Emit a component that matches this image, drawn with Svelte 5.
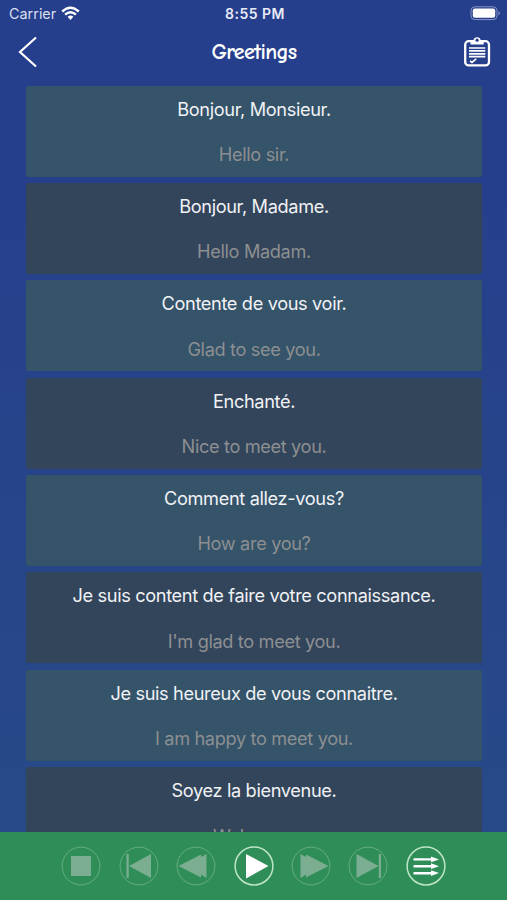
<script>
  const phrases = [
    ['Bonjour, Monsieur.', 'Hello sir.'],
    ['Bonjour, Madame.', 'Hello Madam.'],
    ['Contente de vous voir.', 'Glad to see you.'],
    ['Enchanté.', 'Nice to meet you.'],
    ['Comment allez-vous?', 'How are you?'],
    ['Je suis content de faire votre connaissance.', "I'm glad to meet you."],
    ['Je suis heureux de vous connaitre.', 'I am happy to meet you.'],
    ['Soyez la bienvenue.', 'Welcome.']
  ];

  // Glyphs share a 40×40 box centred on the ring.
  const controls = [
    { label: 'Stop', d: 'M10 10H30V30H10Z' },
    { label: 'First', d: 'M7.5 8H9.7V32H7.5ZM10 20L32 8V32Z' },
    { label: 'Rewind', d: 'M2.5 20L25 8.5V11L30.5 8V32L25 28.5V31.5Z' },
    { label: 'Play', d: 'M12 8L34.5 20L12 32.5Z', active: true },
    { label: 'Forward', d: 'M9.5 8L15 11V8.5L37.5 20L15 31.5V28.5L9.5 32Z' },
    { label: 'Last', d: 'M8.5 8L30.5 20L8.5 32ZM30.8 8H33V32H30.8Z' },
    {
      label: 'Play in order',
      d: 'M7.5 12.2H25V10.5L33 13.4L25 16.2V14.600H7.5ZM7.5 19H25V17.200L33 20.2L25 23V21.400H7.5ZM7.5 26H25V24.200L33 27.100L25 30V28.400H7.5Z',
      active: true
    }
  ];
</script>

<div class="screen">
  <div class="status">
    <div class="carrier">
      <span>Carrier</span>
      <svg width="19" height="15" viewBox="0 0 19 15" fill="none" stroke="#fff" stroke-width="2.4">
        <path d="M1.2 5.5Q9.5-2.2 17.800 5.5M4.100 8.700Q9.5 3.700 14.900 8.700" />
        <path d="M6.600 10.700Q9.5 8.300 12.400 10.700L9.5 13.900Z" fill="#fff" stroke="none" />
      </svg>
    </div>
    <div class="clock">8:55 PM</div>
    <svg class="battery" width="31" height="15" viewBox="0 0 31 15">
      <rect x="1" y=".8" width="26" height="12.800" rx="3.800" fill="none" stroke="#8794c8" />
      <rect x="2.800" y="2.600" width="22.400" height="9.200" rx="2" fill="#fff" />
      <path d="M28.500 5Q31.200 7.200 28.500 9.500Z" fill="#8794c8" />
    </svg>
  </div>

  <header>
    <button aria-label="Back">
      <svg width="22" height="34" viewBox="0 0 22 34" fill="none" stroke="#fff" stroke-width="2.2">
        <path d="M19 2.5L3 17L19 31.5" />
      </svg>
    </button>
    <h1>Greetings</h1>
    <button aria-label="Phrase list">
      <svg width="28" height="32" viewBox="0 0 28 32" fill="none" stroke="#fff">
        <rect x="2.200" y="5.200" width="23.800" height="24.200" rx="3.500" stroke-width="2.300" />
        <path d="M7.500 8.500V5.700Q7.500 4.500 9 4.500H10.500C10.700 .1 17.500 .1 17.700 4.500H19.200Q20.700 4.500 20.700 5.700V8.500Z" fill="#fff" stroke="none" />
        <circle cx="14.100" cy="4.200" r="1.600" fill="#263f8c" stroke="none" />
        <path d="M6 12H22.300M6 14.900H22.300M6 17.800H22.300M6 20.700H22.300" stroke-width="1.700" />
        <path d="M7 24.800L9 26.400L13.200 22.900" stroke-width="1.700" />
      </svg>
    </button>
  </header>

  <main>
    {#each phrases as [french, english]}
      <article>
        <p>{french}</p>
        <p class="translation">{english}</p>
      </article>
    {/each}
  </main>

  <footer>
    {#each controls as control}
      <button class:active={control.active} aria-label={control.label}>
        <svg width="40" height="40" viewBox="0 0 40 40">
          <circle cx="20" cy="20" r="18.900" fill="none" />
          <path d={control.d} />
        </svg>
      </button>
    {/each}
  </footer>
</div>

<style>
  .screen {
    width: 507px;
    height: 900px;
    display: flex;
    flex-direction: column;
    overflow: hidden;
    background: linear-gradient(#263f8c 0%, #263f8c 20%, #284a88 92%);
    color: #fff;
    font-family: Inter, "Liberation Sans", sans-serif;
  }
  button {
    display: block;
    padding: 0;
    border: 0;
    background: none;
  }
  svg {
    display: block;
  }
  .status {
    flex: none;
    height: 27px;
    display: grid;
    grid-template-columns: 1fr auto 1fr;
    align-items: center;
    padding: 0 6px 0 9px;
    box-sizing: border-box;
  }
  .carrier {
    display: flex;
    align-items: center;
    gap: 5px;
    font-size: 14.4px;
    letter-spacing: 0;
    color: #d9def0;
  }
  .carrier svg {
    margin-top: -1px;
  }
  .clock {
    font-size: 14px;
    font-weight: 600;
    letter-spacing: 0.5px;
    color: #e7eaf6;
  }
  .battery {
    justify-self: end;
    margin-top: -1px;
  }
  header {
    flex: none;
    height: 58.6px;
    display: grid;
    grid-template-columns: 1fr auto 1fr;
    align-items: start;
    padding: 8px 16px 0 17px;
    box-sizing: border-box;
  }
  header button:first-child {
    justify-self: start;
  }
  header button:last-child {
    justify-self: end;
    padding-top: 1px;
  }
  h1 {
    margin: 3px 0 0;
    font: 700 22px/28px "Marker Felt", "Comic Neue", "DejaVu Sans Condensed", sans-serif;
    letter-spacing: -0.7px;
  }
  main {
    flex: 1;
    min-height: 0;
    overflow: hidden;
    display: flex;
    flex-direction: column;
    gap: 6.35px;
    padding: 0 25px 0 26px;
  }
  article {
    flex: none;
    height: 91px;
    display: flex;
    flex-direction: column;
    border-radius: 2px;
    background: #355369;
    text-align: center;
  }
  article:nth-child(even) {
    background: #33455b;
  }
  p {
    margin: 0;
    height: 45.5px;
    font-size: 18.2px;
    letter-spacing: -0.36px;
    line-height: 46px;
    color: #f0f2f5;
    white-space: nowrap;
  }
  .translation {
    color: #8c8f91;
  }
  footer {
    flex: none;
    height: 68px;
    display: flex;
    justify-content: center;
    align-items: center;
    gap: 17.4px;
    background: #2f8d58;
  }
  footer circle {
    stroke: #65ad80;
    stroke-width: 1;
  }
  footer path {
    fill: #7bae91;
  }
  .active circle {
    stroke: #bfe5c9;
    stroke-width: 1.5;
  }
  .active path {
    fill: #fff;
  }
</style>
